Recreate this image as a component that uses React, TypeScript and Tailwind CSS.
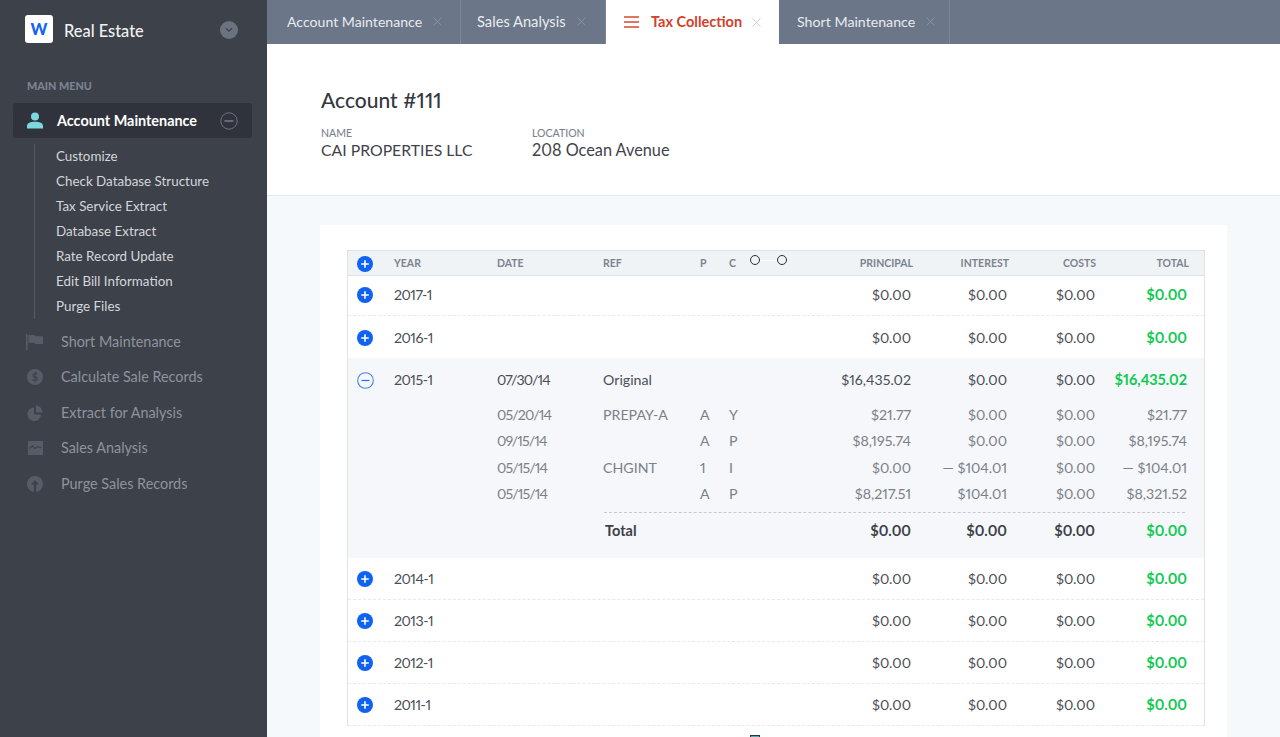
import { X } from 'lucide-react'

const FONT = "font-['Lato','Liberation_Sans',sans-serif] proportional-nums"

const SUB_ITEMS = [
  'Customize',
  'Check Database Structure',
  'Tax Service Extract',
  'Database Extract',
  'Rate Record Update',
  'Edit Bill Information',
  'Purge Files',
]

const TABS = [
  { label: 'Account Maintenance', width: 'w-[194px]', pad: 'pl-[20px]', size: 'text-[14.1px]' },
  { label: 'Sales Analysis', width: 'w-[145px]', pad: 'pl-[16px]', size: 'text-[14.7px]' },
  { label: 'Tax Collection', width: 'w-[173px]', active: true },
  { label: 'Short Maintenance', width: 'w-[171px]', pad: 'pl-[18px]', size: 'text-[14.2px]' },
]

const ROW_GRID = 'grid grid-cols-[46px_103px_106px_97px_29px_182px_96px_88px_92px]'

function FlagIcon() {
  return (
    <svg width="18" height="16" viewBox="0 0 18 16" fill="#575c66">
      <rect x="0" y="0" width="1.6" height="16" />
      <path d="M2.5 1 H8 L9.5 2.2 H17 V10 H9.5 L8 8.8 H2.5 Z" />
    </svg>
  )
}

function DollarIcon() {
  return (
    <svg width="16" height="16" viewBox="0 0 16 16">
      <circle cx="8" cy="8" r="8" fill="#575c66" />
      <text x="8" y="12" textAnchor="middle" fontSize="11" fontWeight="700" fill="#3d4149" fontFamily="Lato, sans-serif">
        $
      </text>
    </svg>
  )
}

function PieIcon() {
  return (
    <svg width="16" height="16" viewBox="0 0 16 16" fill="#575c66">
      <path d="M7 2.5 A6.8 6.8 0 1 0 14 9.5 H7 Z" />
      <path d="M9 0.5 A6.8 6.8 0 0 1 15.5 7.5 H9 Z" />
    </svg>
  )
}

function ChartIcon() {
  return (
    <svg width="15" height="14" viewBox="0 0 15 14">
      <rect width="15" height="14" fill="#575c66" />
      <path d="M1.5 7.5 L4.5 5 L7 7.5 L10 5.5 L13.5 7" fill="none" stroke="#3d4149" strokeWidth="1.1" />
    </svg>
  )
}

function UploadIcon() {
  return (
    <svg width="16" height="16" viewBox="0 0 16 16">
      <circle cx="8" cy="8" r="8" fill="#575c66" />
      <path d="M8 4 L12 8.5 H9.2 V16 H6.8 V8.5 H4 Z" fill="#3d4149" />
    </svg>
  )
}

const NAV_ITEMS = [
  { label: 'Short Maintenance', icon: <FlagIcon />, height: 'h-[35px]' },
  { label: 'Calculate Sale Records', icon: <DollarIcon />, height: 'h-[36px]' },
  { label: 'Extract for Analysis', icon: <PieIcon />, height: 'h-[35px]' },
  { label: 'Sales Analysis', icon: <ChartIcon />, height: 'h-[36px]' },
  { label: 'Purge Sales Records', icon: <UploadIcon />, height: 'h-[35px]' },
]

function PlusBadge() {
  return (
    <svg width="16" height="16" viewBox="0 0 16 16">
      <circle cx="8" cy="8" r="8" fill="#0f62f2" />
      <path d="M8 4.2 V11.8 M4.2 8 H11.8" stroke="#fff" strokeWidth="1.6" />
    </svg>
  )
}

function MinusBadge() {
  return (
    <svg width="17" height="17" viewBox="0 0 17 17">
      <circle cx="8.5" cy="8.5" r="7.8" fill="none" stroke="#4a82e8" strokeWidth="1.1" />
      <path d="M4.5 8.5 H12.5" stroke="#2f6fe6" strokeWidth="1.2" />
    </svg>
  )
}

function Sidebar() {
  return (
    <aside className="flex h-[737px] w-[267px] shrink-0 flex-col bg-[#3d4149]">
      <div className="flex h-[58px] items-center pl-[25px] pr-[29px]">
        <div className="flex h-[28px] w-[28px] items-center justify-center rounded-[3px] bg-white text-[16px] font-black text-[#1464f0]">
          W
        </div>
        <span className="ml-[11px] mt-[5px] flex-1 text-[16.4px] font-medium text-[#f0f1f3]">Real Estate</span>
        <div className="mt-[2px] flex h-[18px] w-[18px] items-center justify-center rounded-full bg-[#6b7280]">
          <svg width="8" height="6" viewBox="0 0 8 6">
            <path d="M1 1.2 L4 4.2 L7 1.2" fill="none" stroke="#3d4149" strokeWidth="1.3" />
          </svg>
        </div>
      </div>
      <div className="pl-[27px] pt-[20px] text-[10.8px] font-black leading-[16px] text-[#7a8494]">MAIN MENU</div>
      <div className="mx-[13px] mt-[9px] flex h-[35px] w-[239px] items-center rounded-[3px] bg-[#30333b] pl-[14px] pr-[14px]">
        <svg width="16" height="17" viewBox="0 0 16 17" fill="#7dd8df">
          <circle cx="8" cy="4.4" r="4" />
          <path d="M0 16.5 V14 C0 11 3.5 9.8 8 9.8 C12.500 9.800 16 11 16 14 V16.5 Z" />
        </svg>
        <span className="ml-[14px] flex-1 text-[14.4px] font-bold text-white">Account Maintenance</span>
        <svg width="18" height="18" viewBox="0 0 18 18">
          <circle cx="9" cy="9" r="8.2" fill="none" stroke="#6b7280" strokeWidth="1" />
          <path d="M4.500 9 H13.500" stroke="#8a909b" strokeWidth="1.2" />
        </svg>
      </div>
      <ul className="ml-[34px] mt-[6px] w-[200px] border-l border-[#565b65] pl-[21px]">
        {SUB_ITEMS.map((item) => (
          <li key={item} className="flex h-[25px] items-center text-[13.4px] text-[#d3d6db]">
            {item}
          </li>
        ))}
      </ul>
      <nav className="mt-[5px] flex flex-col">
        {NAV_ITEMS.map((item) => (
          <div key={item.label} className={`flex items-center ${item.height}`}>
            <span className="flex w-[61px] justify-center pl-[9px]">
              <span className="flex w-[18px] justify-center">{item.icon}</span>
            </span>
            <span className="text-[14.4px] text-[#8d939e]">{item.label}</span>
          </div>
        ))}
      </nav>
    </aside>
  )
}

function TabBar() {
  return (
    <div className="flex h-[44px] shrink-0 bg-[#6b7688]">
      {TABS.map((tab) =>
        tab.active ? (
          <div key={tab.label} className={`flex items-center bg-white pl-[18px] ${tab.width}`}>
            <svg width="15" height="12" viewBox="0 0 15 12" stroke="#d9482b" strokeWidth="1.5">
              <path d="M0 1 H15 M0 6 H15 M0 11 H15" />
            </svg>
            <span className="ml-[12px] text-[14.5px] font-bold leading-[18px] text-[#d2412a]">{tab.label}</span>
            <X size={15} strokeWidth={1.5} className="ml-[7px] text-[#c9ced6]" />
          </div>
        ) : (
          <div key={tab.label} className={`flex items-center border-r border-[#7d8797] pb-[1px] ${tab.pad} ${tab.width}`}>
            <span className={`${tab.size} text-[#e8ebef]`}>{tab.label}</span>
            <X size={15} strokeWidth={1.5} className="ml-[8px] text-[#8a94a3]" />
          </div>
        ),
      )}
    </div>
  )
}

function AccountHeader() {
  return (
    <header className="h-[152px] shrink-0 border-b border-[#e6e9ed] bg-white pl-[54px] pt-[43px]">
      <h1 className="text-[21px] font-medium leading-[26px] text-[#33373e]">Account #111</h1>
      <div className="mt-[14px] flex">
        <div className="w-[211px]">
          <div className="text-[10.500px] font-medium leading-[12px] text-[#7c838e]">NAME</div>
          <div className="mt-[1px] text-[15.8px] leading-[20px] text-[#3f434a]">CAI PROPERTIES LLC</div>
        </div>
        <div>
          <div className="text-[10.500px] font-medium leading-[12px] text-[#7c838e]">LOCATION</div>
          <div className="mt-[1px] text-[16.3px] leading-[20px] text-[#3f434a]">208 Ocean Avenue</div>
        </div>
      </div>
    </header>
  )
}

function Money({ value, className = '' }: { value: string; className?: string }) {
  return <div className={`text-right ${className}`}>{value}</div>
}

function YearRow({ year, height, nudge = '', dashed = true }: { year: string; height: string; nudge?: string; dashed?: boolean }) {
  return (
    <div className={`${ROW_GRID} items-center ${height} ${nudge} ${dashed ? 'border-b border-dashed border-[#e6e9ed]' : ''} text-[14.2px] text-[#4a4e55]`}>
      <div className="flex justify-start pl-[9px]">
        <PlusBadge />
      </div>
      <div className="tracking-[-0.5px]">{year}</div>
      <div />
      <div />
      <div />
      <Money value="$0.00" />
      <Money value="$0.00" />
      <Money value="$0.00" />
      <Money value="$0.00" className="text-[14.500px] font-bold text-[#10c952]" />
    </div>
  )
}

const DETAILS = [
  { date: '05/20/14', ref: 'PREPAY-A', p: 'A', c: 'Y', principal: '$21.77', interest: '$0.00', total: '$21.77', height: 'h-[26px]' },
  { date: '09/15/14', ref: '', p: 'A', c: 'P', principal: '$8,195.74', interest: '$0.00', total: '$8,195.74', height: 'h-[26px]' },
  { date: '05/15/14', ref: 'CHGINT', p: '1', c: 'I', principal: '$0.00', interest: '— $104.01', total: '— $104.01', height: 'h-[27px]' },
  { date: '05/15/14', ref: '', p: 'A', c: 'P', principal: '$8,217.51', interest: '$104.01', total: '$8,321.52', height: 'h-[26px]' },
]

function ExpandedRow() {
  return (
    <div className="h-[200px] bg-[#f5f7fa] text-[14.2px]">
      <div className={`${ROW_GRID} h-[44px] items-center text-[#4a4e55]`}>
        <div className="flex justify-start pl-[9px]">
          <MinusBadge />
        </div>
        <div className="tracking-[-0.5px]">2015-1</div>
        <div className="tracking-[-0.9px]">07/30/14</div>
        <div>Original</div>
        <div />
        <Money value="$16,435.02" />
        <Money value="$0.00" />
        <Money value="$0.00" />
        <Money value="$16,435.02" className="text-[14.500px] font-bold text-[#10c952]" />
      </div>
      {DETAILS.map((d) => (
        <div key={d.date + d.principal} className={`${ROW_GRID} ${d.height} items-center text-[#7b8089]`}>
          <div />
          <div />
          <div className="tracking-[-0.9px]">{d.date}</div>
          <div>{d.ref}</div>
          <div>{d.p}</div>
          <div className="flex">
            <span className="w-[29px]">{d.c}</span>
            <span className="flex-1 text-right">{d.principal}</span>
          </div>
          <Money value={d.interest} />
          <Money value="$0.00" />
          <Money value={d.total} />
        </div>
      ))}
      <div className="ml-[256px] mr-[19px] mt-[5px] border-t border-dashed border-[#c6cbd2]" />
      <div className={`${ROW_GRID} h-[34px] items-center pt-[2px] text-[14.500px] font-bold text-[#3d4149]`}>
        <div />
        <div />
        <div />
        <div className="pl-[2px]">Total</div>
        <div />
        <Money value="$0.00" />
        <Money value="$0.00" />
        <Money value="$0.00" />
        <Money value="$0.00" className="text-[#10c952]" />
      </div>
    </div>
  )
}

function LedgerTable() {
  return (
    <div className="relative border border-b-0 border-[#dfe3e8] bg-white">
      <div className={`${ROW_GRID} h-[25px] items-center border-b border-[#dfe3e8] bg-[#eff3f6] pt-[2px] text-[10.500px] font-bold text-[#7c838e]`}>
        <div className="flex justify-start pl-[9px]">
          <PlusBadge />
        </div>
        <div>YEAR</div>
        <div>DATE</div>
        <div>REF</div>
        <div>P</div>
        <div className="flex justify-between">
          <span>C</span>
          <span className="translate-x-[2px]">PRINCIPAL</span>
        </div>
        <div className="translate-x-[2px] text-right">INTEREST</div>
        <div className="translate-x-[1px] text-right">COSTS</div>
        <div className="translate-x-[2px] text-right">TOTAL</div>
      </div>
      <YearRow year="2017-1" height="h-[40px]" nudge="pb-[2px]" />
      <YearRow year="2016-1" height="h-[42px]" nudge="pt-[1px]" dashed={false} />
      <ExpandedRow />
      <YearRow year="2014-1" height="h-[42px]" nudge="pt-[1px]" />
      <YearRow year="2013-1" height="h-[42px]" nudge="pt-[1px]" />
      <YearRow year="2012-1" height="h-[42px]" nudge="pt-[1px]" />
      <YearRow year="2011-1" height="h-[42px]" nudge="pt-[1px]" />

      {/* connector handles lying over the header */}
      <div className="absolute left-[402px] top-[4px] h-[10px] w-[10px] rounded-full border border-[#2a2d33]" />
      <div className="absolute left-[412px] top-[9px] h-px w-[17px] bg-[#f8fafb]" />
      <div className="absolute left-[429px] top-[4px] h-[10px] w-[10px] rounded-full border border-[#2a2d33]" />
      <div className="absolute left-[402px] top-[484px] h-[6px] w-[10px] border border-[#1f3a44] bg-[#5fa6b5]" />
    </div>
  )
}

export default function App() {
  return (
    <div className={`flex h-[737px] w-[1280px] overflow-hidden ${FONT}`}>
      <Sidebar />
      <main className="flex min-w-0 flex-1 flex-col bg-[#f5f9fc]">
        <TabBar />
        <AccountHeader />
        <div className="flex-1 overflow-hidden px-[53px] pt-[29px]">
          <div className="h-full overflow-hidden bg-white pl-[27px] pr-[22px] pt-[25px]">
            <LedgerTable />
          </div>
        </div>
      </main>
    </div>
  )
}
